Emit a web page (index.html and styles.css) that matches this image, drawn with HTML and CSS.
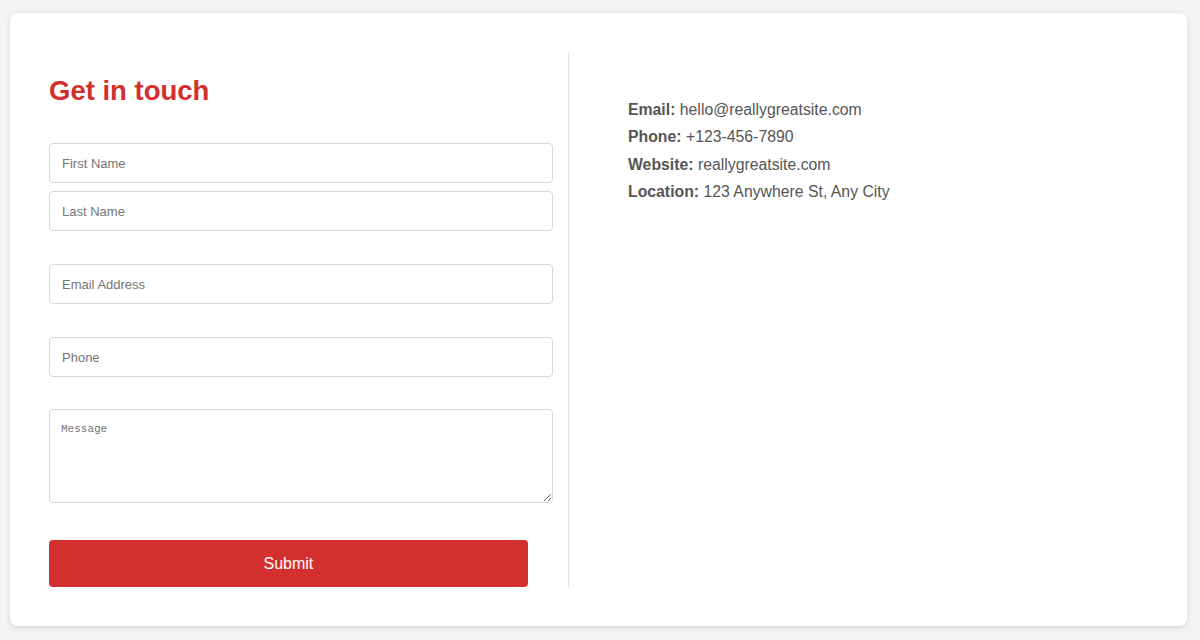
FILE: index.html
```html
<!DOCTYPE html>
<html lang="en">
<head>
<meta charset="utf-8">
<title>Get in touch</title>
<link rel="stylesheet" href="styles.css">
</head>
<body>
<div class="card">
  <section class="form-col">
    <h2 class="title">Get in touch</h2>
    <form class="form">
      <div class="group names">
        <input class="field" type="text" placeholder="First Name">
        <input class="field" type="text" placeholder="Last Name">
      </div>
      <input class="field" type="email" placeholder="Email Address">
      <input class="field" type="tel" placeholder="Phone">
      <textarea class="field area" placeholder="Message"></textarea>
      <button class="submit" type="button">Submit</button>
    </form>
  </section>
  <section class="info-col">
    <p class="info"><strong>Email:</strong> hello@reallygreatsite.com</p>
    <p class="info"><strong>Phone:</strong> +123-456-7890</p>
    <p class="info"><strong>Website:</strong> reallygreatsite.com</p>
    <p class="info"><strong>Location:</strong> 123 Anywhere St, Any City</p>
  </section>
</div>
</body>
</html>
```
FILE: styles.css
```css
* { box-sizing: border-box; }
html, body { margin: 0; padding: 0; }
body {
  background: #f4f4f4;
  font-family: "Liberation Sans", Arial, sans-serif;
  height: 640px;
  overflow: hidden;
}
.card {
  margin: 13px 13px 0 10px;
  height: 613px;
  background: #ffffff;
  border-radius: 8px;
  box-shadow: 0 2px 6px rgba(0, 0, 0, 0.12);
  padding: 39px;
  display: grid;
  grid-template-columns: 520px 1fr;
}
.form-col {
  border-right: 1px solid #e2e2e2;
  padding-right: 15px;
}
.title {
  margin: 23px 0 36px;
  font-size: 27.5px;
  line-height: 32px;
  font-weight: bold;
  color: #d32f2f;
}
.form {
  display: flex;
  flex-direction: column;
  gap: 33px;
}
.group {
  display: flex;
  flex-direction: column;
  gap: 8px;
}
.field {
  display: block;
  width: 100%;
  height: 40px;
  border: 1px solid #d6d6d6;
  border-radius: 4px;
  padding: 0 12px;
  font-family: "Liberation Sans", Arial, sans-serif;
  font-size: 13px;
  color: #333;
  background: #fff;
  outline: none;
}
.field::placeholder { color: #757575; }
.area {
  margin-top: -1px;
  height: 94px;
  padding: 13px 11px;
  font-family: "Liberation Mono", monospace;
  font-size: 11px;
  resize: vertical;
}
.submit {
  margin-top: 4px;
  width: 95%;
  height: 47px;
  border: none;
  border-radius: 4px;
  background: #d32f2f;
  color: #ffffff;
  font-family: "Liberation Sans", Arial, sans-serif;
  font-size: 16px;
  cursor: pointer;
}
.info-col {
  padding: 44px 0 0 59px;
}
.info {
  margin: 0;
  font-size: 15.8px;
  line-height: 27.3px;
  color: #555555;
}
.info strong { color: #555555; }
```
